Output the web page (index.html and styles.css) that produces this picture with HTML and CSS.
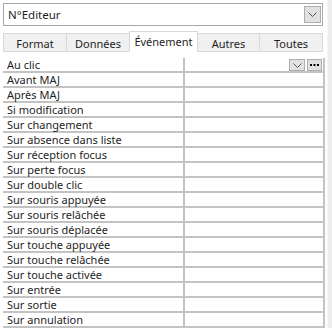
FILE: index.html
```html
<!DOCTYPE html>
<html lang="fr">
<head>
  <meta charset="UTF-8">
  <title>Feuille de propriétés</title>
  <link rel="stylesheet" href="styles.css">
</head>
<body>
  <div class="sheet">
    <div class="combo">
      <span class="combo-text">N°Editeur</span>
      <span class="drop">
        <svg width="9" height="5" viewBox="0 0 9 5"><path d="M0.5 0.5 L4.5 4.5 L8.5 0.5" fill="none" stroke="#555" stroke-width="1"/></svg>
      </span>
    </div>
    <div class="tabs">
      <div class="tab t1">Format</div>
      <div class="tab t2">Données</div>
      <div class="tab t3 active">Événement</div>
      <div class="tab t4">Autres</div>
      <div class="tab t5">Toutes</div>
    </div>
    <div class="panel">
      <div class="grid">
        <div class="row">
          <div class="name">Au clic</div>
          <div class="value first">
            <span class="mini">
              <svg width="9" height="5" viewBox="0 0 9 5"><path d="M0.5 0.5 L4.5 4.5 L8.5 0.5" fill="none" stroke="#555" stroke-width="1"/></svg>
            </span>
            <span class="mini dots">
              <svg width="9" height="2" viewBox="0 0 9 2"><rect x="0" y="0" width="2" height="2" fill="#000"/><rect x="3.5" y="0" width="2" height="2" fill="#000"/><rect x="7" y="0" width="2" height="2" fill="#000"/></svg>
            </span>
          </div>
        </div>
        <div class="row"><div class="name">Avant MAJ</div><div class="value"></div></div>
        <div class="row"><div class="name">Après MAJ</div><div class="value"></div></div>
        <div class="row"><div class="name">Si modification</div><div class="value"></div></div>
        <div class="row"><div class="name">Sur changement</div><div class="value"></div></div>
        <div class="row"><div class="name">Sur absence dans liste</div><div class="value"></div></div>
        <div class="row"><div class="name">Sur réception focus</div><div class="value"></div></div>
        <div class="row"><div class="name">Sur perte focus</div><div class="value"></div></div>
        <div class="row"><div class="name">Sur double clic</div><div class="value"></div></div>
        <div class="row"><div class="name">Sur souris appuyée</div><div class="value"></div></div>
        <div class="row"><div class="name">Sur souris relâchée</div><div class="value"></div></div>
        <div class="row"><div class="name">Sur souris déplacée</div><div class="value"></div></div>
        <div class="row"><div class="name">Sur touche appuyée</div><div class="value"></div></div>
        <div class="row"><div class="name">Sur touche relâchée</div><div class="value"></div></div>
        <div class="row"><div class="name">Sur touche activée</div><div class="value"></div></div>
        <div class="row"><div class="name">Sur entrée</div><div class="value"></div></div>
        <div class="row"><div class="name">Sur sortie</div><div class="value"></div></div>
        <div class="row"><div class="name">Sur annulation</div><div class="value"></div></div>
      </div>
    </div>
  </div>
  <div class="strip"></div>
</body>
</html>
```

FILE: styles.css
```css
* { margin: 0; padding: 0; box-sizing: border-box; }
body {
  font-family: "Noto Sans", "Open Sans", sans-serif;
  font-size: 11px;
  color: #1e1e1e;
  background: #fff;
  display: flex;
  height: 328px;
  overflow: hidden;
}
.sheet { width: 327px; }
.strip {
  width: 5px;
  background: #ececec;
  border-left: 1px solid #f6f6f6;
}
.combo {
  margin: 3px 0 0 3px;
  width: 320px;
  height: 23px;
  border: 1px solid #a8a8a8;
  display: flex;
  align-items: center;
  justify-content: space-between;
  padding: 0 1px 0 4px;
}
.combo-text { font-size: 11.5px; }
.drop {
  width: 17px;
  height: 17px;
  background: #e1e1e1;
  border: 1px solid #adadad;
  display: flex;
  align-items: center;
  justify-content: center;
}
.tabs {
  display: flex;
  align-items: flex-end;
  margin: 4px 0 0 3px;
  height: 21px;
  position: relative;
  z-index: 1;
}
.tab {
  height: 18px;
  background: #f0f0f0;
  border: 1px solid #d9d9d9;
  border-bottom: none;
  margin-left: -1px;
  display: flex;
  align-items: center;
  justify-content: center;
  font-size: 11px;
  padding-top: 1px;
}
.t1 { width: 64px; margin-left: 0; }
.t2 { width: 64px; }
.t3 { width: 69px; }
.t4 { width: 63px; }
.t5 { width: 64px; }
.tab.active {
  background: #fff;
  height: 21px;
  margin-bottom: -1px;
  align-items: flex-start;
  padding-top: 2px;
}
.panel {
  border-top: 1px solid #d9d9d9;
  margin-left: 3px;
  width: 320px;
  padding-top: 6px;
}
.grid {
  width: 322px;
  border-right: 2px solid #c3c3c3;
}
.row {
  display: flex;
  height: 15px;
  border-bottom: 2px solid #c3c3c3;
}
.name {
  width: 182px;
  border-right: 2px solid #c3c3c3;
  padding-left: 4px;
  line-height: 13px;
  white-space: nowrap;
}
.value {
  flex: 1;
  display: flex;
  justify-content: flex-end;
  align-items: flex-start;
  gap: 2px;
  padding: 1px 1px 0 0;
}
.mini {
  width: 16px;
  height: 12px;
  background: #e1e1e1;
  border: 1px solid #adadad;
  display: flex;
  align-items: center;
  justify-content: center;
}
.dots { width: 15px; }
```
